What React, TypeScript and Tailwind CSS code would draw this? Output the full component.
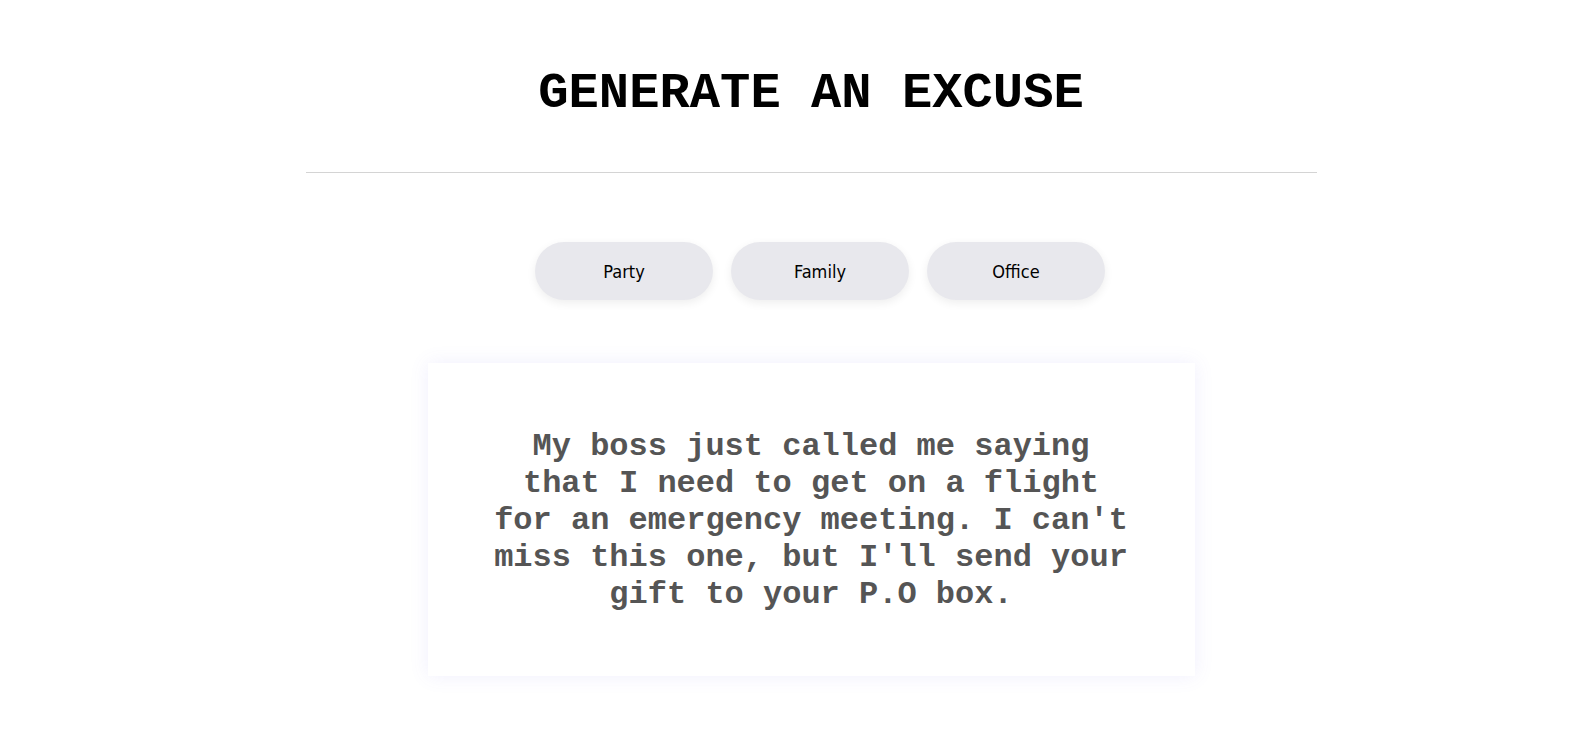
import React, { useState } from "react";

const excuses: Record<string, string> = {
    Party: "My boss just called me saying that I need to get on a flight for an emergency meeting. I can't miss this one, but I'll send your gift to your P.O box.",
    Family: "My boss just called me saying that I need to get on a flight for an emergency meeting. I can't miss this one, but I'll send your gift to your P.O box.",
    Office: "My boss just called me saying that I need to get on a flight for an emergency meeting. I can't miss this one, but I'll send your gift to your P.O box.",
};

function CategoryButton({ label, onClick }: { label: string; onClick: () => void }) {
    return (
        <button
            onClick={onClick}
            className="ml-[18px] w-[178px] h-[58px] rounded-full bg-[#e8e8ed] text-[18px] text-black shadow-[0_3px_10px_rgba(0,0,0,0.07)] font-['DejaVu_Sans_Condensed','Noto_Sans',sans-serif]"
        >
            {label}
        </button>
    );
}

export default function App() {
    const [category, setCategory] = useState("Office");

    return (
        <div className="min-h-[746px] bg-white pl-[34px] flex flex-col items-center">
            <h1 className="mt-[64px] text-[50.5px] leading-[60px] font-bold text-black font-['Courier_New','Liberation_Mono',monospace]">
                GENERATE AN EXCUSE
            </h1>

            <hr className="mt-[48px] w-[1011px] border-t border-[#d4d4d4]" />

            <div className="mt-[69px] flex">
                {Object.keys(excuses).map((name) => (
                    <CategoryButton key={name} label={name} onClick={() => setCategory(name)} />
                ))}
            </div>

            <div className="mt-[63px] w-[767px] h-[313px] bg-white flex items-center justify-center shadow-[0_0_18px_rgba(110,100,240,0.10)]">
                <p className="w-[640px] pt-[2px] text-center text-[32px] leading-[37px] font-bold text-[#555] font-['Courier_New','Liberation_Mono',monospace]">
                    {excuses[category]}
                </p>
            </div>
        </div>
    );
}
